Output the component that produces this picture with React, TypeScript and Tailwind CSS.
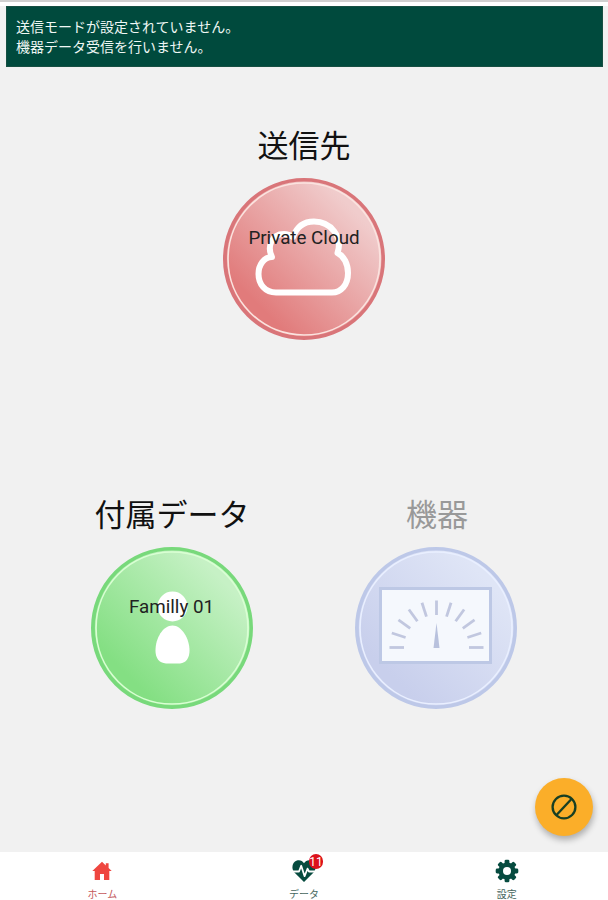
import React from "react";

const ticks = Array.from({ length: 11 }, (_, i) => i * 18 - 90);

type DiscProps = {
  id: string;
  from: string;
  to: string;
  rim: string;
  ring: string;
  label?: string;
  children: React.ReactNode;
};

function Disc({ id, from, to, rim, ring, label, children }: DiscProps) {
  return (
    <div className="relative size-[164px]">
      <svg viewBox="0 0 164 164" className="block size-full" fill="none">
        <defs>
          <linearGradient id={id} x1="0.24" y1="0.82" x2="0.84" y2="0.22">
            <stop offset="0" stopColor={from} />
            <stop offset="1" stopColor={to} />
          </linearGradient>
        </defs>
        <circle cx="82" cy="82" r="79.2" fill={`url(#${id})`} stroke={rim} strokeWidth="3.6" />
        <circle cx="82" cy="82" r="76" stroke={ring} strokeWidth="1.7" />
        {children}
      </svg>
      {label && (
        <span className="absolute inset-x-0 top-[49px] text-center text-[18.8px] leading-6 whitespace-nowrap text-[#222]">
          {label}
        </span>
      )}
    </div>
  );
}

function HomeIcon() {
  return (
    <svg viewBox="0 0 20 20" className="block size-5">
      <path fill="#ef4640" d="M10 .7 13.8 4.4V2.2H16.6V7.1L19.7 10.1H17.3V19H12V12.9H8V19H2.7V10.1H.3Z" />
    </svg>
  );
}

function HeartIcon() {
  return (
    <svg viewBox="0 0 24 24" className="block size-6">
      <path fill="#064b3f" d="M12 23 2.2 13.200C-1 9.300.2 3.100 4.900 1.600c2.800-.9 5.500.1 7.100 2.600 1.600-2.500 4.300-3.500 7.100-2.600 4.700 1.500 5.900 7.700 2.700 11.600Z" />
      <path fill="none" stroke="white" strokeWidth="1.8" strokeLinejoin="round" d="M.8 12.500H7L9.200 6.800 12.600 17.200 15.500 9.700 17 12.500H23" />
    </svg>
  );
}

function GearIcon() {
  return (
    <svg viewBox="0 0 24 24" className="block size-6">
      <g fill="#064b3f">
        {[0, 45, 90, 135].map((a) => (
          <rect key={a} x="9.6" y=".7" width="4.8" height="22.6" rx="1.4" transform={`rotate(${a} 12 12)`} />
        ))}
        <circle cx="12" cy="12" r="8.6" />
      </g>
      <circle cx="12" cy="12" r="4" fill="white" />
    </svg>
  );
}

export default function App() {
  return (
    <div className="relative flex h-[900px] w-[608px] flex-col overflow-hidden bg-[#f1f1f1] font-[Roboto,'Noto_Sans_CJK_JP',sans-serif]">
      <header className="border-t-2 border-[#d0d0d0]">
        <div className="h-1 bg-white" />
        <div className="mr-[5px] ml-1.5 h-[61px] border border-[#164f42] bg-[#004a3d] px-[9px] pt-[10px] text-[14px] leading-[20px] text-[#eff7f4]">
          <p>送信モードが設定されていません。</p>
          <p>機器データ受信を行いません。</p>
        </div>
      </header>

      <main className="flex flex-1 flex-col">
        <section className="flex h-[369px] flex-col items-center pt-[58px]">
          <h1 className="h-[52px] text-[31px] leading-[44px] text-[#111]">送信先</h1>
          <Disc id="cloud" from="#e17b7b" to="#f0cccc" rim="#d97579" ring="#fbe3df" label="Private Cloud">
            <path
              d="M50 80C45 70 49 57 62 57Q67 57 71 60C75 49 82 44.500 92 44.500C109 44.500 121 60 115.500 76C122 79 126 87 126 96C126 108 119 115.500 110 115.500H54C43 115.500 36.500 107 36.500 97C36.500 88 42 80 50 80Z"
              stroke="white"
              strokeWidth="6"
              strokeLinejoin="round"
            />
          </Disc>
        </section>

        <section className="flex pl-[39.5px]">
          <div className="flex w-[264px] flex-col items-center pt-[58px]">
            <h2 className="h-[52px] pl-px text-[31px] leading-[44px] text-[#111]">付属データ</h2>
            <Disc id="person" from="#84df83" to="#c6f1c5" rim="#78d97b" ring="#d9ffd3" label="Familly 01">
              <circle cx="82.500" cy="60.500" r="15" fill="white" />
              <path d="M82.500 79.500C92 79.500 99.500 93 99.500 104.500C99.500 112 96 117 90 117.500H76C69 117 65.500 112 65.500 104.500C65.500 92 73 79.500 82.500 79.500Z" fill="white" />
            </Disc>
          </div>
          <div className="flex w-[264px] flex-col items-center pt-[58px]">
            <h2 className="h-[52px] pl-[3px] text-[31px] leading-[44px] text-[#999]">機器</h2>
            <Disc id="meter" from="#c8cfec" to="#dfe5f6" rim="#bdc8e8" ring="#e9efff">
              <rect x="26.500" y="42.500" width="110" height="74" fill="#f5f8fd" stroke="#bdc8e5" strokeWidth="3" />
              <g stroke="#c1c7df" strokeWidth="2.800">
                {ticks.map((a) => (
                  <path key={a} d="M82.500 54.500V69" transform={`rotate(${a} 82.500 101.500)`} />
                ))}
              </g>
              <path d="M82.500 77 85.500 102H79.500Z" fill="#b8c1dd" />
            </Disc>
          </div>
        </section>
      </main>

      <button
        aria-label="停止"
        className="absolute top-[778px] left-[535px] flex size-[58px] items-center justify-center rounded-full bg-[#fbae29] shadow-[1px_4px_6px_rgba(0,0,0,0.28)]"
      >
        <svg viewBox="0 0 28 28" className="size-7" fill="none" stroke="#183f23" strokeWidth="2.300">
          <circle cx="14" cy="14" r="11.400" />
          <path d="m6.500 22 15-16" />
        </svg>
      </button>

      <nav className="grid h-12 grid-cols-3 bg-white text-[10px] leading-3">
        <div className="flex flex-col items-center pt-[9px] pl-0.5 text-[#c4595c]">
          <HomeIcon />
          <span className="mt-2">ホーム</span>
        </div>
        <div className="flex flex-col items-center pt-[7px] text-[#46665e]">
          <div className="relative">
            <HeartIcon />
            <span className="absolute -top-[5px] left-[17px] flex h-[15px] w-[14px] items-center justify-center rounded-full bg-[#dc111c] text-[12px] text-white">
              11
            </span>
          </div>
          <span className="mt-1.5">データ</span>
        </div>
        <div className="flex flex-col items-center pt-[7px] text-[#46665e]">
          <GearIcon />
          <span className="mt-1.5">設定</span>
        </div>
      </nav>
    </div>
  );
}
